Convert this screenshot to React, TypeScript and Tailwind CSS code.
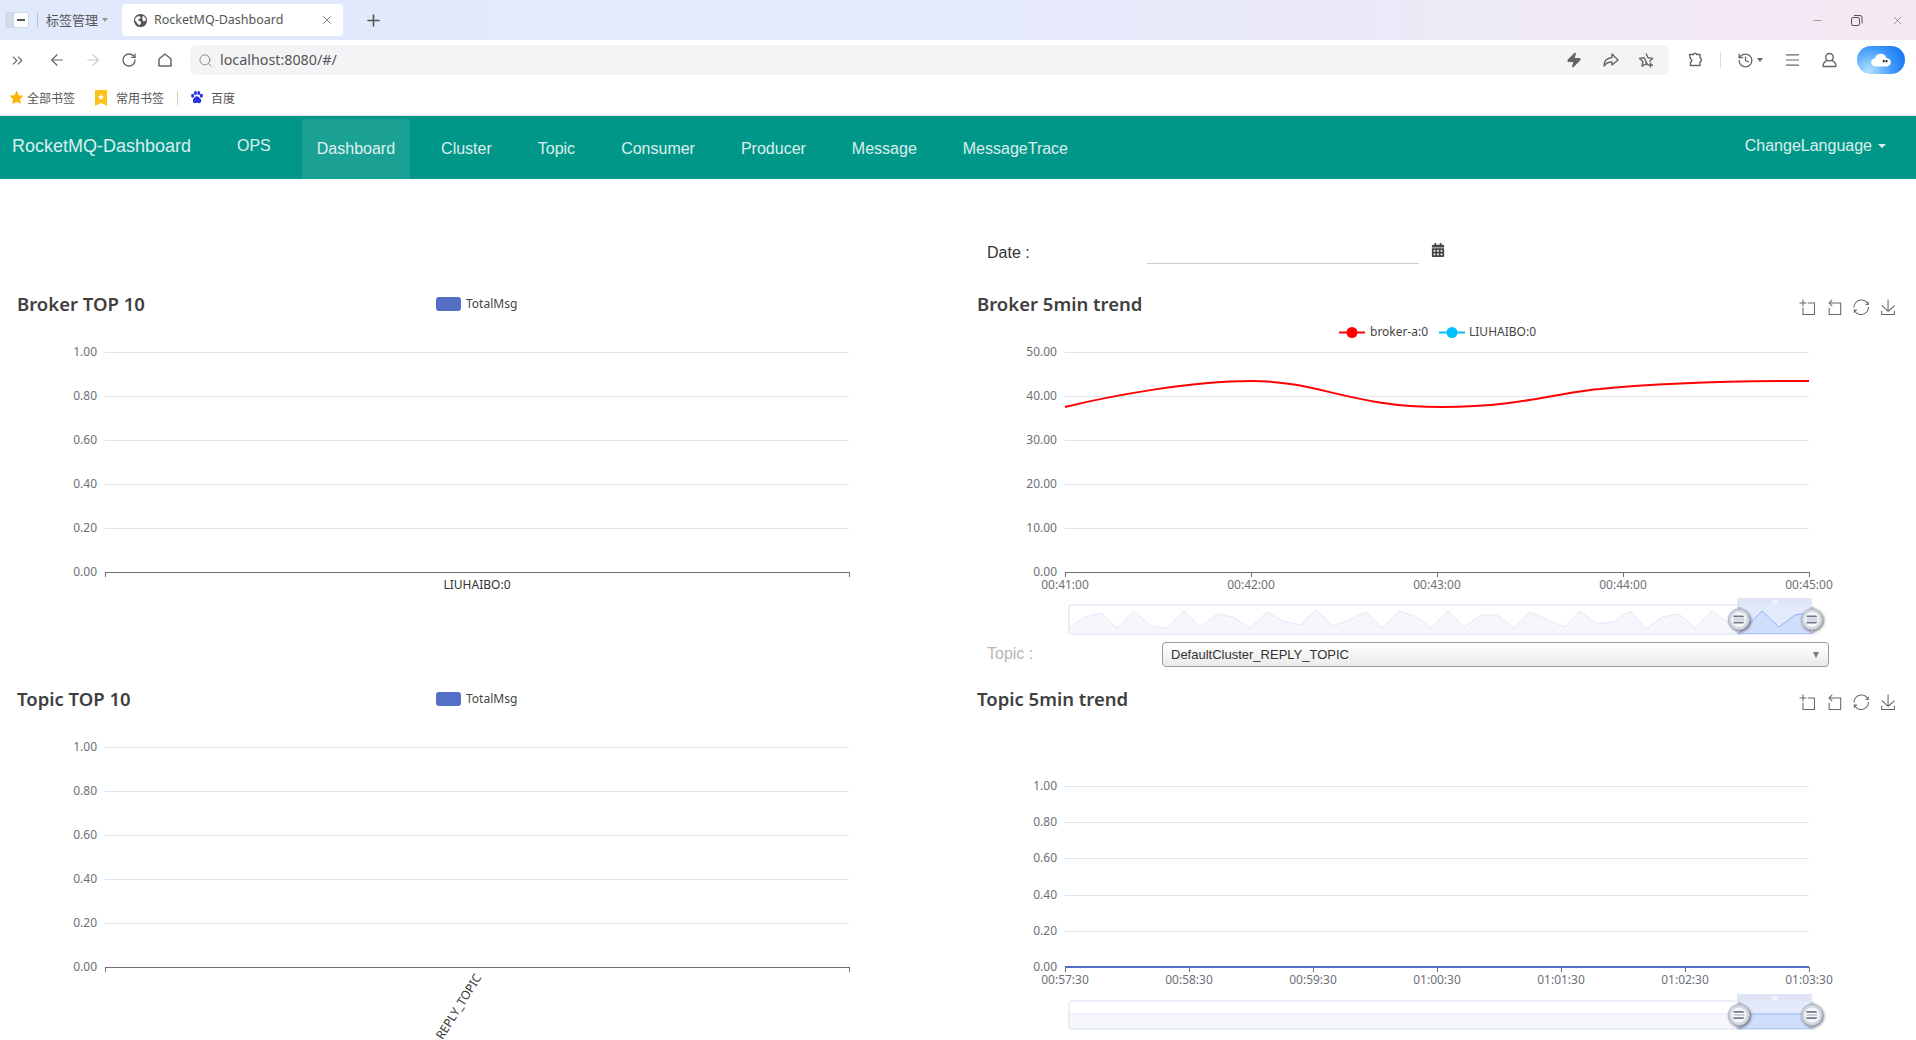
import { ArrowLeft, ArrowRight, ChevronsRight, History, Minus, Plus, RotateCw, Search, X, Zap } from "lucide-react"
import { FaCalendarAlt } from "react-icons/fa"

const sans = "font-['Noto_Sans','Noto_Sans_CJK_SC',sans-serif]"
const arial = "font-['Liberation_Sans',Arial,sans-serif]"
const cjk = "font-['Noto_Sans_CJK_SC','Noto_Sans',sans-serif]"

const navItems = ["Cluster", "Topic", "Consumer", "Producer", "Message", "MessageTrace"]

// echarts toolbox icons, drawn in a 60 unit box
const toolboxIcons = [
  "M0,13.5h26.9 M13.5,26.9V0 M32.1,13.5H58V58H13.5V32.1",
  "M22,1.4L9.9,13.5l12.3,12.3 M10.3,13.5H54.9v44.6H10.3v-26",
  "M47,18.9h9.8V8.7 M56.3,20.1C52.1,9,40.5,0.6,26.8,2.1C12.6,3.7,1.6,16.2,2.1,30.6 M13,41.1H3.1v10.2 M3.7,39.9c4.2,11.1,15.8,19.5,29.5,18c14.2-1.6,25.2-14.1,24.7-28.5",
  "M4.7,22.9L29.3,45.5L54.7,23.4M4.6,43.6L4.6,58L53.8,58L53.8,43.6M29.2,45.1L29.2,0",
]

// shadow zoom wave, read off the reference as [x, y] on the page
const wave = [
  [1069, 628], [1085, 617], [1101, 613], [1117, 628], [1134, 611], [1151, 626], [1167, 628], [1184, 611],
  [1200, 627], [1217, 614], [1233, 617], [1250, 628], [1267, 612], [1283, 621], [1300, 625], [1316, 610],
  [1333, 626], [1349, 620], [1366, 612], [1382, 628], [1399, 611], [1415, 616], [1431, 628], [1448, 611],
  [1464, 627], [1481, 615], [1497, 615], [1514, 628], [1530, 612], [1564, 627], [1580, 611], [1597, 624],
  [1613, 622], [1630, 611], [1646, 629], [1662, 617], [1679, 614], [1695, 628], [1712, 611], [1729, 623],
  [1745, 628], [1762, 611], [1779, 627], [1795, 615], [1812, 612],
]
const wavePath = wave.map(([x, y]) => `${x},${y}`).join(" ")

function Legend({ className }: { className: string }) {
  return (
    <div className={`flex items-center gap-[5px] ${className}`}>
      <div className="h-[14px] w-[25px] rounded-[3px] bg-[#5470c6]" />
      <span className={`${sans} text-xs text-[#444]`}>TotalMsg</span>
    </div>
  )
}

function Toolbox() {
  return (
    <div className="flex gap-[11px] pt-[15px] pr-[20px]">
      {toolboxIcons.map((d) => (
        <svg key={d} viewBox="-2 -2 62 62" className="h-[16px] w-[16px]" fill="none" stroke="#666" strokeWidth="4">
          <path d={d} />
        </svg>
      ))}
    </div>
  )
}

function PanelTitle({ children }: { children: string }) {
  return <h2 className={`${sans} text-[18.500px] leading-[40px] font-semibold text-[#3f3f3f]`}>{children}</h2>
}

function Grid({ x1, x2, rows }: { x1: number; x2: number; rows: [number, string][] }) {
  return (
    <g>
      {rows.map(([y, label]) => (
        <g key={y}>
          <line x1={x1} x2={x2} y1={y + 0.5} y2={y + 0.5} stroke="#E0E6F1" />
          <text x={x1 - 8} y={y - 1} dominantBaseline="central" textAnchor="end" fontSize="12" fill="#6E7079">
            {label}
          </text>
        </g>
      ))}
    </g>
  )
}

function XAxis({ y, ticks, x1, x2 }: { y: number; ticks: [number, string][]; x1: number; x2: number }) {
  return (
    <g>
      <line x1={x1} x2={x2} y1={y + 0.5} y2={y + 0.5} stroke="#6E7079" />
      {ticks.map(([x, label]) => (
        <g key={x}>
          <line x1={x + 0.5} x2={x + 0.5} y1={y} y2={y + 5} stroke="#6E7079" />
          <text x={x} y={y + 12} dominantBaseline="central" textAnchor="middle" fontSize="12" fill="#6E7079">
            {label}
          </text>
        </g>
      ))}
    </g>
  )
}

function Handle({ x, y }: { x: number; y: number }) {
  return (
    <g transform={`translate(${x} ${y})`} className="drop-shadow-[1.500px_1.500px_1.500px_rgba(0,0,0,0.55)]">
      <path d="M-1 -12.500h2v3h-2z M-1 9.500h2v3h-2z" fill="#ACB8D1" />
      <circle r="10.500" fill="#d5d8df" stroke="#aab3c6" />
      <circle r="7.500" fill="#f7f7f9" />
      <path d="M-5.500 -4h9.500l1.500 1.800h-11z M-5.500 2.200h11l-1.500 1.800h-9.500z" fill="#6f7a92" />
      <path d="M-5.500 -1h11v2h-11z" fill="#c9ceda" />
    </g>
  )
}

function DataZoom({ top, bottom, area, id }: { top: number; bottom: number; area: string; id: string }) {
  const left = 1069
  const right = 1812
  const selLeft = 1737
  return (
    <g>
      <rect x={left} y={top} width={right - left} height={bottom - top} rx="3" fill="#fff" stroke="#e4e9f6" strokeWidth="1.5" />
      <clipPath id={id}>
        <rect x={selLeft} y={top} width={right - selLeft} height={bottom - top} />
      </clipPath>
      <polygon points={`${left},${bottom} ${area} ${right},${bottom}`} fill="#f6f7fc" stroke="#e3e8f5" />
      <rect x={selLeft} y={top} width={right - selLeft} height={bottom - top} fill="#e3eafb" />
      <g clipPath={`url(#${id})`}>
        <polygon points={`${left},${bottom} ${area} ${right},${bottom}`} fill="#cfdefb" stroke="#93b3f3" />
      </g>
      <rect x={selLeft} y={top - 7} width={right - selLeft} height="7" fill="#dfe5f4" />
      <path d={`M${selLeft + 36} ${top - 5}v4 M${selLeft + 38} ${top - 5}v4 M${selLeft + 40} ${top - 5}v4`} stroke="#fff" />
      <Handle x={1739} y={(top + bottom) / 2} />
      <Handle x={1812} y={(top + bottom) / 2} />
    </g>
  )
}

function ChartSvg({ x, y, w, h, children }: { x: number; y: number; w: number; h: number; children: React.ReactNode }) {
  return (
    <svg viewBox={`${x} ${y} ${w} ${h}`} width={w} height={h} className={`block ${sans}`}>
      {children}
    </svg>
  )
}

const valueRows = (start: number, step: number, labels: string[]) =>
  labels.map((label, i) => [Math.round(start + step * i), label] as [number, string])

function BrowserChrome() {
  return (
    <div className="shrink-0">
      <div className="flex h-[40px] items-center bg-gradient-to-r from-[#e1e9fd] via-[#e4eafc] to-[#f6e9f3]">
        <div className="ml-[5px] flex h-[16px] w-[24px] items-center justify-end rounded-[3px] bg-[#d3daea]">
          <div className="flex h-[16px] w-[16px] items-center justify-center rounded-[3px] border border-[#d3daea] bg-white">
            <div className="h-[2px] w-[8px] bg-[#555]" />
          </div>
        </div>
        <div className="ml-[8px] h-[14px] w-px bg-[#b9bfcc]" />
        <span className={`${cjk} ml-[8px] text-[13px] text-[#555]`}>标签管理</span>
        <div className="ml-[4px] h-0 w-0 border-x-[3px] border-t-[4px] border-x-transparent border-t-[#999]" />
        <div className="ml-[14px] flex h-[32px] w-[221px] items-center rounded-[4px] bg-white pl-[11px]">
          <svg viewBox="0 0 16 16" className="h-[15px] w-[15px]">
            <circle cx="8" cy="8" r="7" fill="#555" />
            <path d="M3 5c2-2 4-2 5-1s-1 2-2 3 1 2 2 2 1 2-1 4c-2-1-3-3-4-4s-1-3 0-4zM11 3c1 1 3 3 3 5l-3 1c-1-2-2-4 0-6z" fill="#fff" />
          </svg>
          <span className={`${sans} ml-[6px] w-[166px] text-[12.500px] text-[#555]`}>RocketMQ-Dashboard</span>
          <X size={14} strokeWidth={1.5} className="text-[#777]" />
        </div>
        <Plus size={19} strokeWidth={2} className="ml-[21px] text-[#555]" />
        <div className="ml-auto flex items-center pr-[12px] text-[#555]">
          <Minus size={13} strokeWidth={1} />
          <svg viewBox="0 0 13 13" className="ml-[26px] h-[13px] w-[13px]" fill="none" stroke="#555">
            <rect x="1.500" y="3.500" width="8" height="8" rx="1.500" />
            <path d="M4 1.500h6a2 2 0 0 1 2 2v6" />
          </svg>
          <X size={13} strokeWidth={1} className="ml-[28px]" />
        </div>
      </div>
      <div className="flex h-[40px] items-center bg-white text-[#666]">
        <ChevronsRight size={17} strokeWidth={1.5} className="ml-[9px]" />
        <ArrowLeft size={18} strokeWidth={1.6} className="ml-[22px]" />
        <ArrowRight size={18} strokeWidth={1.6} className="ml-[18px] text-[#ccc]" />
        <RotateCw size={16} strokeWidth={2} className="ml-[19px]" />
        <svg viewBox="0 0 16 16" className="ml-[20px] h-[16px] w-[16px]" fill="none" stroke="#666" strokeWidth="1.5">
          <path d="M2 7l6-5 6 5v7H2z" strokeLinejoin="round" />
        </svg>
        <div className="ml-[17px] flex h-[30px] w-[1479px] items-center rounded-[7px] bg-[#f4f4f7] pl-[8px]">
          <Search size={15} strokeWidth={1.5} className="text-[#888]" />
          <span className={`${sans} ml-[7px] text-[14.300px] text-[#555]`}>localhost:8080/#/</span>
          <div className="ml-auto flex items-center pr-[15px]">
            <Zap size={16} className="fill-[#666] text-[#666]" />
            <svg viewBox="0 0 16 16" className="ml-[21px] h-[16px] w-[16px]" fill="none" stroke="#666" strokeWidth="1.4" strokeLinejoin="round">
              <path d="M9 2l6 6-6 5v-3C6 10 3 11 1 14c0-5 3-8 8-8.500z" />
            </svg>
            <svg viewBox="0 0 16 16" className="ml-[19px] h-[16px] w-[16px]" fill="none" stroke="#666" strokeWidth="1.4" strokeLinejoin="round">
              <path d="M8 1.500l2 4.300 4.600.6-3.300 3.100M9.500 12.600L8 11.800l-4 2.300.9-4.600-3.400-3.100 4.600-.6z" />
              <path d="M12.500 10.500v5M10 13h5" />
            </svg>
          </div>
        </div>
        <svg viewBox="0 0 16 16" className="ml-[19px] h-[16px] w-[16px]" fill="none" stroke="#666" strokeWidth="1.4" strokeLinejoin="round">
          <path d="M1.500 2.500h4.200c-.6-1.800 3.400-1.800 2.800 0h3.500v3.400c1.900-.5 1.900 4.200 0 3.700v3.900H2.500v-3.500c1.600.6 1.600-3.500 0-3.100z" />
        </svg>
        <div className="ml-[16px] h-[16px] w-px bg-[#ddd]" />
        <History size={17} strokeWidth={1.8} className="ml-[16px]" />
        <div className="ml-[3px] h-0 w-0 border-x-[3px] border-t-[4px] border-x-transparent border-t-[#666]" />
        <svg viewBox="0 0 14 14" className="ml-[23px] h-[14px] w-[13px]" stroke="#666" strokeWidth="1.300">
          <path d="M0 1.500h14M0 7h14M0 12.500h14" />
        </svg>
        <svg viewBox="0 0 16 16" className="ml-[23px] h-[16px] w-[15px]" fill="none" stroke="#666" strokeWidth="1.500">
          <circle cx="8" cy="5" r="4" />
          <path d="M1 15c0-3 1.500-5 4.500-6.500M15 15c0-3-1.500-5-4.500-6.500M1 15h14" />
        </svg>
        <div className="ml-[20px] flex h-[28px] w-[48px] items-center justify-center rounded-full bg-[radial-gradient(circle_at_25%_90%,#b4e2ff,#3d97fb_55%,#0a6cf0)]">
          <svg viewBox="0 0 24 16" className="h-[16px] w-[22px]">
            <path d="M6 15a4.500 4.500 0 0 1-.5-9A6.500 6.500 0 0 1 18 6a4.500 4.500 0 0 1 .5 9z" fill="#fff" />
            <rect x="14" y="8" width="2" height="2.500" fill="#222" />
            <rect x="17" y="8" width="2" height="2.500" fill="#222" />
          </svg>
        </div>
      </div>
      <div className={`${cjk} flex h-[36px] items-center border-b border-[#e3e3e3] bg-white text-xs text-[#555]`}>
        <svg viewBox="0 0 16 16" className="ml-[9px] h-[15px] w-[15px]">
          <path d="M8 .5l2.300 5 5.200.6-3.800 3.600 1 5.300L8 12.400 3.300 15l1-5.300L.5 6.100l5.200-.6z" fill="#ffb400" />
        </svg>
        <span className="ml-[3px]">全部书签</span>
        <svg viewBox="0 0 12 16" className="ml-[20px] h-[16px] w-[12px]">
          <path d="M0 0h12v16l-6-3-6 3z" fill="#ffc21a" />
          <path d="M6 4l1 2 2 .3-1.500 1.400.4 2L6 8.800l-1.900.9.4-2L3 6.300 5 6z" fill="#fff" />
        </svg>
        <span className="ml-[9px]">常用书签</span>
        <div className="ml-[13px] h-[14px] w-px bg-[#ccc]" />
        <svg viewBox="0 0 16 16" className="ml-[12px] h-[15px] w-[14px]" fill="#2932e1">
          <ellipse cx="3" cy="6" rx="1.800" ry="2.300" />
          <ellipse cx="6.200" cy="2.800" rx="1.700" ry="2.300" />
          <ellipse cx="10" cy="2.800" rx="1.700" ry="2.300" />
          <ellipse cx="13" cy="6" rx="1.800" ry="2.300" />
          <path d="M8 6.500c2 0 2.500 2 4 3s1 5-1.500 5c-1 0-1.500-.5-2.500-.5s-1.500.5-2.500.5C3 14.500 3 11 4 9.500s2-3 4-3z" />
        </svg>
        <span className="ml-[7px]">百度</span>
      </div>
    </div>
  )
}

function Navbar() {
  return (
    <nav className={`${arial} flex h-[63px] shrink-0 items-start bg-[#009688] text-white/85`}>
      <a className="ml-[12px] flex h-[60px] w-[178px] items-center text-[18px] whitespace-nowrap">RocketMQ-Dashboard</a>
      <a className="ml-[47px] flex h-[59px] items-center text-[16px]">OPS</a>
      <a className="mt-[3px] ml-[31px] flex h-[60px] items-center bg-white/10 px-[15px] text-[16px]">Dashboard</a>
      {navItems.map((item) => (
        <a key={item} className="mt-[3px] ml-[16px] flex h-[60px] items-center px-[15px] text-[16px]">
          {item}
        </a>
      ))}
      <a className="ml-auto flex h-[59px] items-center pr-[30px] text-[16px]">
        ChangeLanguage
        <span className="ml-[6px] h-0 w-0 border-x-[4px] border-t-[4px] border-x-transparent border-t-white/85" />
      </a>
    </nav>
  )
}

export default function App() {
  const percentLabels = ["1.00", "0.80", "0.60", "0.40", "0.20", "0.00"]
  return (
    <div className="flex h-[1040px] w-[1916px] flex-col overflow-hidden bg-white">
      <BrowserChrome />
      <Navbar />

      <div className="grid h-[105px] shrink-0 grid-cols-2">
        <div />
        <div className={`${arial} flex items-start pt-[61px] pl-[29px] text-[#333]`}>
          <label className="w-[160px] text-[16px] leading-[26px]">Date :</label>
          <input className="h-[24px] w-[272px] border-b border-[#ccc] bg-transparent outline-none" />
          <FaCalendarAlt className="mt-[3px] ml-[12px] text-[14px] text-[#444]" />
        </div>
      </div>

      <div className="grid h-[395px] shrink-0 grid-cols-2">
        <div>
          <div className="relative h-[40px] pl-[17px]">
            <PanelTitle>Broker TOP 10</PanelTitle>
            <Legend className="absolute top-[12px] left-[436px]" />
          </div>
          <ChartSvg x={0} y={324} w={958} h={280}>
            <Grid x1={105} x2={849} rows={valueRows(352, 44, percentLabels)} />
            <XAxis y={572} x1={105} x2={849} ticks={[[105, ""], [849, ""]]} />
            <text x={477} y={584} dominantBaseline="central" textAnchor="middle" fontSize="12" fill="#333">
              LIUHAIBO:0
            </text>
          </ChartSvg>
        </div>
        <div>
          <div className="flex h-[40px] items-start justify-between pl-[19px]">
            <PanelTitle>Broker 5min trend</PanelTitle>
            <Toolbox />
          </div>
          <ChartSvg x={958} y={324} w={958} h={318}>
            <g fontSize="12" fill="#444">
              <path d="M1339 332.500h26" stroke="#f00" strokeWidth="2" />
              <circle cx="1352" cy="332.500" r="5.500" fill="#f00" />
              <text x={1370} y={331} dominantBaseline="central">broker-a:0</text>
              <path d="M1439 332.500h26" stroke="#00bfff" strokeWidth="2" />
              <circle cx="1452" cy="332.500" r="5.500" fill="#00bfff" />
              <text x={1469} y={331} dominantBaseline="central">LIUHAIBO:0</text>
            </g>
            <Grid x1={1065} x2={1809} rows={valueRows(352, 44, ["50.00", "40.00", "30.00", "20.00", "10.00", "0.00"])} />
            <XAxis
              y={572}
              x1={1065}
              x2={1809}
              ticks={[[1065, "00:41:00"], [1251, "00:42:00"], [1437, "00:43:00"], [1623, "00:44:00"], [1809, "00:45:00"]]}
            />
            <path
              d="M1065 407C1110 396 1190 381 1251 381C1320 381 1350 407 1442 407C1520 407 1560 392 1600 389C1660 383 1740 381 1809 381"
              fill="none"
              stroke="#f00"
              strokeWidth="2"
            />
            <DataZoom top={605} bottom={634} area={wavePath} id="brokerZoom" />
          </ChartSvg>
          <div className={`${arial} flex h-[25px] items-center pl-[29px]`}>
            <label className="mb-[2px] w-[175px] text-[16px] text-[#b5b5b5]">Topic :</label>
            <div className="flex h-[25px] w-[667px] items-center justify-between rounded-[4px] border border-[#999] bg-gradient-to-b from-white to-[#ebebeb] pr-[9px] pl-[8px] text-[13px] text-[#333]">
              DefaultCluster_REPLY_TOPIC
              <span className="h-0 w-0 border-x-[3.5px] border-t-[6px] border-x-transparent border-t-[#777]" />
            </div>
          </div>
        </div>
      </div>

      <div className="grid min-h-0 flex-1 grid-cols-2">
        <div>
          <div className="relative h-[40px] pl-[17px]">
            <PanelTitle>Topic TOP 10</PanelTitle>
            <Legend className="absolute top-[12px] left-[436px]" />
          </div>
          <ChartSvg x={0} y={719} w={958} h={321}>
            <Grid x1={105} x2={849} rows={valueRows(747, 44, percentLabels)} />
            <XAxis y={967} x1={105} x2={849} ticks={[[105, ""], [849, ""]]} />
            <text x={478} y={975} textAnchor="end" dominantBaseline="central" fontSize="12" fill="#333" transform="rotate(-58 478 975)">
              DefaultCluster_REPLY_TOPIC
            </text>
          </ChartSvg>
        </div>
        <div>
          <div className="flex h-[40px] items-start justify-between pl-[19px]">
            <PanelTitle>Topic 5min trend</PanelTitle>
            <Toolbox />
          </div>
          <ChartSvg x={958} y={719} w={958} h={321}>
            <Grid x1={1065} x2={1809} rows={valueRows(786, 36.2, percentLabels)} />
            <XAxis
              y={967}
              x1={1065}
              x2={1809}
              ticks={[
                [1065, "00:57:30"],
                [1189, "00:58:30"],
                [1313, "00:59:30"],
                [1437, "01:00:30"],
                [1561, "01:01:30"],
                [1685, "01:02:30"],
                [1809, "01:03:30"],
              ]}
            />
            <path d="M1065 967H1809" stroke="#5470c6" strokeWidth="2" />
            <DataZoom top={1001} bottom={1029} area="1069,1014 1812,1014" id="topicZoom" />
          </ChartSvg>
        </div>
      </div>
    </div>
  )
}
